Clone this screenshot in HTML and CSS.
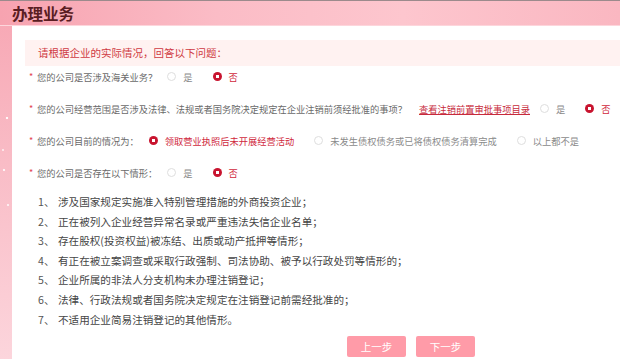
FILE: index.html
```html
<!DOCTYPE html>
<html lang="zh-CN">
<head>
<meta charset="utf-8">
<title>办理业务</title>
<link rel="stylesheet" href="styles.css">
</head>
<body>
<div class="page">
  <header class="top">
    <h1 class="title">办理业务</h1>
  </header>
  <main class="panel">
    <div class="notice">请根据企业的实际情况，回答以下问题：</div>

    <div class="q">
      <span class="req">*</span><span class="qtext">您的公司是否涉及海关业务？</span>
      <span class="opts">
        <span class="opt"><span class="radio"></span><span class="lbl">是</span></span>
        <span class="opt"><span class="radio on"></span><span class="lbl sel">否</span></span>
      </span>
    </div>

    <div class="q">
      <span class="req">*</span><span class="qtext">您的公司经营范围是否涉及法律、法规或者国务院决定规定在企业注销前须经批准的事项？</span>
      <a class="link" href="#">查看注销前置审批事项目录</a>
      <span class="opts">
        <span class="opt"><span class="radio"></span><span class="lbl">是</span></span>
        <span class="opt"><span class="radio on"></span><span class="lbl sel">否</span></span>
      </span>
    </div>

    <div class="q">
      <span class="req">*</span><span class="qtext">您的公司目前的情况为：</span>
      <span class="opts">
        <span class="opt"><span class="radio on"></span><span class="lbl sel">领取营业执照后未开展经营活动</span></span>
        <span class="opt"><span class="radio"></span><span class="lbl">未发生债权债务或已将债权债务清算完成</span></span>
        <span class="opt"><span class="radio"></span><span class="lbl">以上都不是</span></span>
      </span>
    </div>

    <div class="q">
      <span class="req">*</span><span class="qtext">您的公司是否存在以下情形：</span>
      <span class="opts">
        <span class="opt"><span class="radio"></span><span class="lbl">是</span></span>
        <span class="opt"><span class="radio on"></span><span class="lbl sel">否</span></span>
      </span>
    </div>

    <ol class="list">
      <li><span class="num">1、</span>涉及国家规定实施准入特别管理措施的外商投资企业；</li>
      <li><span class="num">2、</span>正在被列入企业经营异常名录或严重违法失信企业名单；</li>
      <li><span class="num">3、</span>存在股权(投资权益)被冻结、出质或动产抵押等情形；</li>
      <li><span class="num">4、</span>有正在被立案调查或采取行政强制、司法协助、被予以行政处罚等情形的；</li>
      <li><span class="num">5、</span>企业所属的非法人分支机构未办理注销登记；</li>
      <li><span class="num">6、</span>法律、行政法规或者国务院决定规定在注销登记前需经批准的；</li>
      <li><span class="num">7、</span>不适用企业简易注销登记的其他情形。</li>
    </ol>

    <div class="actions">
      <button class="btn" type="button">上一步</button>
      <button class="btn" type="button">下一步</button>
    </div>
  </main>
</div>
</body>
</html>
```

FILE: styles.css
```css
* { box-sizing: border-box; }

html, body {
  margin: 0;
  padding: 0;
  height: 100%;
}

body {
  font-family: "Noto Sans CJK SC", "Noto Sans", sans-serif;
  background:
    radial-gradient(circle at 7px 118px, rgba(255,255,255,0.9) 0 1px, transparent 1.6px),
    radial-gradient(circle at 4px 170px, rgba(255,255,255,0.8) 0 1px, transparent 1.6px),
    radial-gradient(circle at 8px 205px, rgba(255,255,255,0.7) 0 1px, transparent 1.6px),
    radial-gradient(circle at 3px 150px, rgba(255,255,255,0.6) 0 0.8px, transparent 1.4px),
    linear-gradient(to bottom, #f7a6b3 0%, #f9bcc6 45%, #fcd5dc 100%);
  overflow: hidden;
}

.page {
  display: flex;
  flex-direction: column;
  height: 359px;
  border-top: 1px solid #9c8a8c;
}

.top {
  height: 25px;
  flex: none;
  background: linear-gradient(to right, #f7a3b0 0%, #fbbcc6 35%, #fdc6ce 65%, #fab7c1 100%);
  border-bottom: 1px solid #fdd6dc;
  display: flex;
  align-items: center;
  padding-left: 12px;
}

.title {
  margin: 0;
  font-size: 15.5px;
  font-weight: 700;
  color: #5a1d22;
  line-height: 1;
  letter-spacing: 0;
  padding-top: 2px;
}

.panel {
  flex: 1;
  margin-left: 12px;
  background: #ffffff;
  padding-top: 14px;
}

.notice {
  margin-left: 13px;
  height: 26px;
  line-height: 26px;
  padding-left: 13px;
  background: #fff2f1;
  color: #cf3a43;
  font-size: 10.5px;
}

.q {
  display: flex;
  align-items: center;
  height: 21px;
  margin-top: 11px;
  padding-left: 17px;
  font-size: 9.25px;
  color: #6a6a6a;
  white-space: nowrap;
}

.q:first-of-type { margin-top: 0; }

.notice + .q { margin-top: 0; }

.req {
  color: #e2434f;
  width: 8px;
  flex: none;
  font-size: 9px;
}

.qtext { flex: none; }

.link {
  color: #c72a3c;
  text-decoration: underline;
  margin-left: 12px;
  flex: none;
}

.opts {
  display: flex;
  align-items: center;
  gap: 20px;
  margin-left: 10px;
}

.link + .opts { margin-left: 10px; }

.opt {
  display: flex;
  align-items: center;
  gap: 7px;
}

.radio {
  width: 9px;
  height: 9px;
  border-radius: 50%;
  border: 1px solid #dedede;
  background: #fff;
  flex: none;
}

.radio.on {
  border: none;
  background: radial-gradient(circle, #ffffff 0 1.5px, #c8142f 2px);
}

.lbl { color: #8a8a8a; }

.lbl.sel { color: #d0283c; }

.list {
  list-style: none;
  margin: 9px 0 0 0;
  padding: 0 0 0 26px;
  font-size: 10.6px;
  color: #454545;
}

.list li {
  height: 19.6px;
  line-height: 19.6px;
  white-space: nowrap;
}

.num {
  display: inline-block;
  width: 20px;
  color: #555;
}

.actions {
  display: flex;
  gap: 10px;
  margin-top: 7px;
  padding-left: 335px;
}

.btn {
  width: 59px;
  height: 21px;
  border: none;
  border-radius: 2px;
  background: #ff9ba8;
  color: #ffffff;
  font-family: "Noto Sans CJK SC", "Noto Sans", sans-serif;
  font-size: 10.5px;
  padding: 0;
  cursor: pointer;
}
```
